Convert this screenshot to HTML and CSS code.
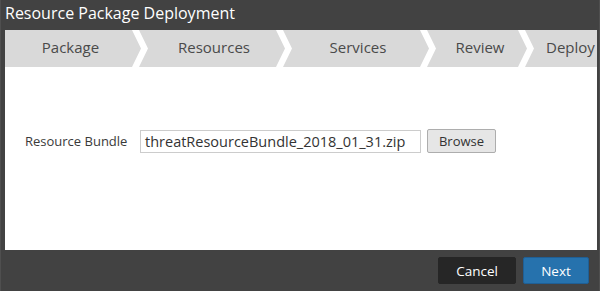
FILE: index.html
```html
<!DOCTYPE html>
<html>
<head>
<meta charset="utf-8">
<link rel="stylesheet" href="styles.css">
</head>
<body>
<div class="dialog">
  <div class="title">Resource Package Deployment</div>
  <div class="steps">
    <div class="step step-package">Package</div>
    <svg class="chev" width="16" height="37" viewBox="0 0 16 37"><polygon points="0,0 7,0 16,18.5 7,37 0,37 9,18.5" fill="#fff"/></svg>
    <div class="step step-resources">Resources</div>
    <svg class="chev" width="16" height="37" viewBox="0 0 16 37"><polygon points="0,0 7,0 16,18.5 7,37 0,37 9,18.5" fill="#fff"/></svg>
    <div class="step step-services">Services</div>
    <svg class="chev" width="16" height="37" viewBox="0 0 16 37"><polygon points="0,0 7,0 16,18.5 7,37 0,37 9,18.5" fill="#fff"/></svg>
    <div class="step step-review">Review</div>
    <svg class="chev" width="16" height="37" viewBox="0 0 16 37"><polygon points="0,0 7,0 16,18.5 7,37 0,37 9,18.5" fill="#fff"/></svg>
    <div class="step step-deploy">Deploy</div>
  </div>
  <div class="body">
    <div class="field">
      <label class="label">Resource Bundle</label>
      <div class="input">threatResourceBundle_2018_01_31.zip</div>
      <button class="btn-browse">Browse</button>
    </div>
  </div>
  <div class="footer">
    <button class="btn btn-cancel">Cancel</button>
    <button class="btn btn-next">Next</button>
  </div>
</div>
</body>
</html>
```
FILE: styles.css
```css
* { box-sizing: border-box; }
html, body { margin: 0; padding: 0; }
body {
  width: 600px;
  height: 291px;
  background: #424242;
  font-family: "Open Sans", "Liberation Sans", sans-serif;
  overflow: hidden;
}
.dialog {
  height: 291px;
  border-left: 1px solid #4f4f4f;
  border-right: 1px solid #4f4f4f;
  padding: 0 2px 0 4px;
  display: flex;
  flex-direction: column;
}
.title {
  height: 30px;
  color: #ffffff;
  font-size: 16px;
  line-height: 27px;
  white-space: nowrap;
}
.steps {
  height: 37px;
  background: #d9d9d9;
  display: flex;
  overflow: hidden;
  white-space: nowrap;
}
.chev { flex: none; display: block; }
.step {
  flex: none;
  color: #4a4a4a;
  font-size: 15px;
  line-height: 35px;
  text-align: center;
  padding-left: 4px;
}
.step-package { width: 127px; }
.step-resources { width: 128px; }
.step-services { width: 128px; }
.step-review { width: 82px; padding-left: 6px; }
.step-deploy { text-align: left; padding-left: 12px; }
.body {
  flex: 1;
  background: #ffffff;
  padding-top: 62px;
}
.field {
  display: flex;
  align-items: center;
  height: 24px;
}
.label {
  width: 135px;
  padding-left: 20px;
  font-size: 13px;
  color: #3a3a3a;
}
.input {
  width: 281px;
  height: 23px;
  border: 1px solid #cccccc;
  font-size: 14.5px;
  color: #333333;
  line-height: 21px;
  padding-left: 4px;
  white-space: nowrap;
}
.btn-browse {
  margin-left: 6px;
  width: 69px;
  height: 24px;
  background: #e6e6e6;
  border: 1px solid #adadad;
  border-radius: 2px;
  font-family: inherit;
  font-size: 13px;
  color: #333333;
  padding: 0;
}
.footer {
  height: 41px;
  display: flex;
  justify-content: flex-end;
  align-items: flex-start;
  padding: 7px 8px 0 0;
  gap: 7px;
}
.btn {
  height: 27px;
  border-radius: 2px;
  font-family: inherit;
  font-size: 13.5px;
  color: #ffffff;
  padding: 0;
}
.btn-cancel {
  width: 78px;
  background: #262626;
  border: 1px solid #262626;
}
.btn-next {
  width: 66px;
  background: #2672ad;
  border: 1px solid #1f5f95;
}
```
